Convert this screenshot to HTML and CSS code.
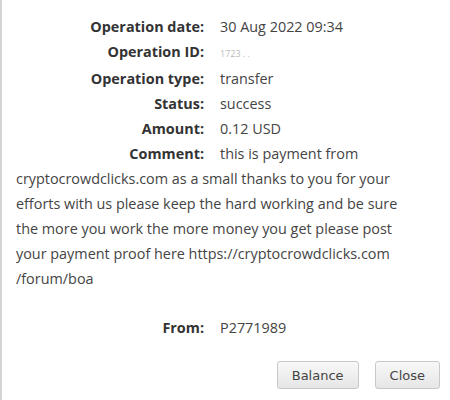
FILE: index.html
```html
<!DOCTYPE html>
<html>
<head>
    <link rel="stylesheet" href="styles.css">
</head>
<body>
    <div class="dialog">
        <div class="info">
            <div class="row"><span class="label">Operation date:</span>30 Aug 2022 09:34</div>
            <div class="row"><span class="label">Operation ID:</span><span class="hidden-id">1723 . .</span></div>
            <div class="row"><span class="label">Operation type:</span>transfer</div>
            <div class="row"><span class="label">Status:</span>success</div>
            <div class="row"><span class="label">Amount:</span>0.12 USD</div>
            <div class="row"><span class="label">Comment:</span>this is payment from cryptocrowdclicks.com as a small thanks to you for your efforts with us please keep the hard working and be sure the more you work the more money you get please post your payment proof here https://cryptocrowdclicks.com /forum/boa</div>
            <div class="row from"><span class="label">From:</span>P2771989</div>
        </div>
        <div class="buttons">
            <button class="btn">Balance</button>
            <button class="btn">Close</button>
        </div>
    </div>
</body>
</html>
```

FILE: styles.css
```css
body {
    margin: 0;
    background: #fff;
}
.dialog {
    width: 450px;
    height: 400px;
    box-sizing: border-box;
    border-left: 2px solid #d4d4d4;
    padding-top: 14px;
}
.info {
    font-family: "Open Sans", "Liberation Sans", sans-serif;
    font-size: 14.4px;
    line-height: 25px;
    color: #444;
    padding-left: 14px;
    width: 400px;
}
.label {
    display: inline-block;
    width: 188px;
    margin-right: 16px;
    text-align: right;
    font-weight: bold;
    color: #333;
}
.hidden-id {
    color: #bbb;
    font-size: 9px;
}
.from {
    margin-top: 24px;
}
.buttons {
    display: flex;
    justify-content: flex-end;
    gap: 16px;
    padding-right: 10px;
    margin-top: 21px;
}
.btn {
    font-family: "DejaVu Sans", Verdana, sans-serif;
    font-size: 13px;
    color: #444;
    height: 28px;
    padding: 0 14px;
    border: 1px solid #c8c8c8;
    border-radius: 3px;
    background: linear-gradient(#f8f8f8, #e6e6e6);
}
```
